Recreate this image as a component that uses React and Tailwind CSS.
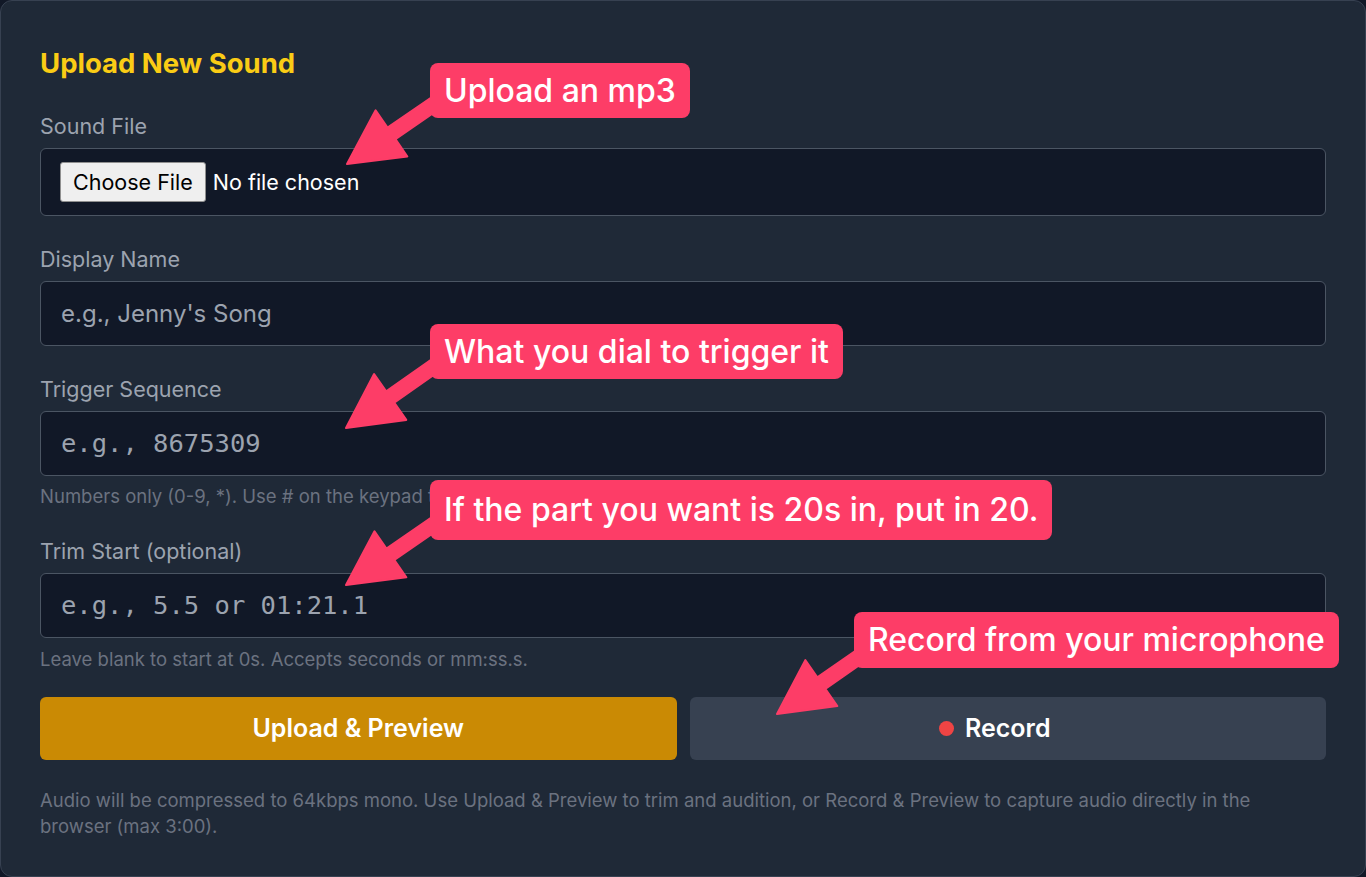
import React from "react";

const SANS = "font-['Inter','Noto_Sans',sans-serif]";
const MONO = "font-['DejaVu_Sans_Mono','Liberation_Mono',monospace]";

// arrow polygon from a start point (hidden under the callout) to the tip
function arrowPoints(sx, sy, tx, ty) {
  const dx = tx - sx;
  const dy = ty - sy;
  const len = Math.hypot(dx, dy);
  const ux = dx / len;
  const uy = dy / len;
  const px = -uy;
  const py = ux;
  const head = 54;
  const hw = 28;
  const sw = 7;
  const bx = tx - ux * head;
  const by = ty - uy * head;
  const pts = [
    [sx + px * sw, sy + py * sw],
    [bx + px * sw, by + py * sw],
    [bx + px * hw, by + py * hw],
    [tx, ty],
    [bx - px * hw, by - py * hw],
    [bx - px * sw, by - py * sw],
    [sx - px * sw, sy - py * sw],
  ];
  return pts.map((p) => p.join(",")).join(" ");
}

const arrows = [
  [440, 100, 347, 164],
  [440, 362, 346, 428],
  [440, 520, 346, 585],
  [866, 652, 777, 714],
];

function Callout({ className, children }) {
  return (
    <div
      className={`absolute rounded-lg bg-[#fd3d67] px-[14px] text-[32px] leading-[55px] font-medium text-white whitespace-nowrap ${SANS} ${className}`}
    >
      {children}
    </div>
  );
}

function Label({ children }) {
  return <div className="text-[21.5px] leading-[28px] text-[#9ca3af]">{children}</div>;
}

export default function App() {
  return (
    <div className={`relative min-h-[877px] bg-[#111827] ${SANS}`}>
      <div className="h-[877px] rounded-xl border border-[#374151] bg-[#1f2937] px-[39px] pt-[45px]">
        <h2 className="text-[27.5px] leading-[34px] font-bold text-[#facc15]">Upload New Sound</h2>

        <div className="mt-[32px]">
          <Label>Sound File</Label>
          <div className="mt-[8px] flex h-[68px] items-center rounded-md border border-[#4b5563] bg-[#111827] px-[19px]">
            <button className="h-[40px] rounded-[3px] border border-[#8f8f8f] bg-[#efefef] px-[12px] text-[21.5px] text-black">
              Choose File
            </button>
            <span className="ml-[7px] text-[21.5px] text-white">No file chosen</span>
          </div>
        </div>

        <div className="mt-[29px]">
          <Label>Display Name</Label>
          <div className="mt-[8px] flex h-[65px] items-center rounded-md border border-[#4b5563] bg-[#111827] px-[20px] text-[24px] text-[#9ca3af]">
            e.g., Jenny's Song
          </div>
        </div>

        <div className="mt-[29px]">
          <Label>Trigger Sequence</Label>
          <div className={`mt-[8px] flex h-[65px] items-center rounded-md border border-[#4b5563] bg-[#111827] px-[20px] text-[25.5px] text-[#9ca3af] ${MONO}`}>
            e.g., 8675309
          </div>
          <p className="mt-[9px] text-[18.5px] leading-[22px] text-[#6b7280]">
            Numbers only (0-9, *). Use # on the keypad to finish dialing.
          </p>
        </div>

        <div className="mt-[30px]">
          <Label>Trim Start (optional)</Label>
          <div className={`mt-[8px] flex h-[65px] items-center rounded-md border border-[#4b5563] bg-[#111827] px-[20px] text-[25.5px] text-[#9ca3af] ${MONO}`}>
            e.g., 5.5 or 01:21.1
          </div>
          <p className="mt-[10px] text-[18.5px] leading-[22px] text-[#6b7280]">
            Leave blank to start at 0s. Accepts seconds or mm:ss.s.
          </p>
        </div>

        <div className="mt-[27px] grid grid-cols-2 gap-[13px]">
          <button className="h-[63px] rounded-md bg-[#ca8a04] text-[25px] font-semibold text-white">
            Upload &amp; Preview
          </button>
          <button className="flex h-[63px] items-center justify-center gap-[11px] rounded-md bg-[#374151] pr-[26px] text-[25px] font-semibold text-white">
            <span className="h-[15px] w-[15px] rounded-full bg-[#ef4444]" />
            Record
          </button>
        </div>

        <p className="mt-[27px] text-[18.5px] leading-[26px] text-[#6b7280]">
          Audio will be compressed to 64kbps mono. Use Upload &amp; Preview to trim and audition, or Record &amp; Preview to capture audio directly in the browser (max 3:00).
        </p>
      </div>

      {/* annotation overlay */}
      <svg className="pointer-events-none absolute inset-0" width="1366" height="877">
        {arrows.map((a, i) => (
          <polygon key={i} points={arrowPoints(...a)} fill="#fd3d67" strokeLinejoin="round" stroke="#fd3d67" strokeWidth="2" />
        ))}
      </svg>
      <Callout className="left-[430px] top-[63px]">Upload an mp3</Callout>
      <Callout className="left-[430px] top-[324px]">What you dial to trigger it</Callout>
      <Callout className="left-[430px] top-[480px] leading-[60px]">If the part you want is 20s in, put in 20.</Callout>
      <Callout className="left-[854px] top-[612px] leading-[56px]">Record from your microphone</Callout>
    </div>
  );
}
